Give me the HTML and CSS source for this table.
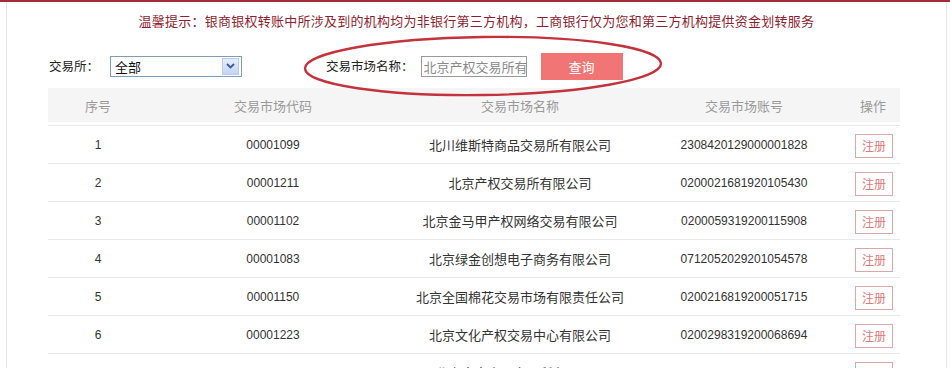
FILE: index.html
```html
<!DOCTYPE html>
<html lang="zh-CN">
<head>
<meta charset="utf-8">
<title>交易市场</title>
<link rel="stylesheet" href="styles.css">
</head>
<body>
<div class="outer">
  <div class="shell">
    <p class="notice">温馨提示：银商银权转账中所涉及到的机构均为非银行第三方机构，工商银行仅为您和第三方机构提供资金划转服务</p>
    <div class="filters">
      <span class="label">交易所：</span>
      <div class="select">
        <span class="select-text">全部</span>
        <span class="select-btn">
          <svg width="9" height="6" viewBox="0 0 9 6"><path d="M1 1 L4.5 4.5 L8 1" fill="none" stroke="#3a5a9a" stroke-width="1.8"/></svg>
        </span>
      </div>
      <span class="label label-market">交易市场名称：</span>
      <div class="input">北京产权交易所有限公司</div>
      <button class="search">查询</button>
    </div>
    <div class="grid">
      <div class="thead">
        <div>序号</div><div>交易市场代码</div><div>交易市场名称</div><div>交易市场账号</div><div>操作</div>
      </div>
      <div class="row"><div class="num">1</div><div class="num">00001099</div><div class="name">北川维斯特商品交易所有限公司</div><div class="num">2308420129000001828</div><div><span class="reg">注册</span></div></div>
      <div class="row"><div class="num">2</div><div class="num">00001211</div><div class="name">北京产权交易所有限公司</div><div class="num">0200021681920105430</div><div><span class="reg">注册</span></div></div>
      <div class="row"><div class="num">3</div><div class="num">00001102</div><div class="name">北京金马甲产权网络交易有限公司</div><div class="num">0200059319200115908</div><div><span class="reg">注册</span></div></div>
      <div class="row"><div class="num">4</div><div class="num">00001083</div><div class="name">北京绿金创想电子商务有限公司</div><div class="num">0712052029201054578</div><div><span class="reg">注册</span></div></div>
      <div class="row"><div class="num">5</div><div class="num">00001150</div><div class="name">北京全国棉花交易市场有限责任公司</div><div class="num">0200216819200051715</div><div><span class="reg">注册</span></div></div>
      <div class="row"><div class="num">6</div><div class="num">00001223</div><div class="name">北京文化产权交易中心有限公司</div><div class="num">0200298319200068694</div><div><span class="reg">注册</span></div></div>
      <div class="row"><div class="num">7</div><div class="num">00001236</div><div class="name">北京大宗商品交易所有限公司</div><div class="num">0200049319200074411</div><div><span class="reg">注册</span></div></div>
    </div>
  </div>
  <svg class="circle" width="380" height="74" viewBox="0 0 380 74">
    <ellipse cx="186" cy="36" rx="178" ry="29" fill="none" stroke="#c4323c" stroke-width="2.4" transform="rotate(-0.8 186 36)"/>
  </svg>
</div>
</body>
</html>
```
FILE: styles.css
```css
html, body {
  margin: 0;
  padding: 0;
  background: #fff;
  font-family: "Noto Sans CJK SC", "Liberation Sans", sans-serif;
}
.outer {
  position: relative;
  border-top: 2px solid #a32d37;
  height: 366px;
  overflow: hidden;
  padding-left: 6px;
}
.shell {
  width: 939px;
  height: 400px;
  border-left: 1px solid #e6e6e6;
  border-right: 1px solid #e6e6e6;
}
.notice {
  margin: 0;
  padding-top: 9px;
  height: 20px;
  line-height: 20px;
  text-align: center;
  font-size: 13px;
  color: #8e1f30;
  letter-spacing: 0.25px;
}
.filters {
  display: flex;
  align-items: center;
  height: 28px;
  margin-top: 21px;
  padding-left: 42px;
}
.label {
  font-size: 12.5px;
  color: #222;
  line-height: 20px;
}
.select {
  margin-left: 11px;
  width: 130px;
  height: 19px;
  border: 1px solid #7f9db9;
  display: flex;
  align-items: center;
  justify-content: space-between;
}
.select-text {
  font-size: 13px;
  color: #111;
  padding-left: 4px;
  line-height: 17px;
}
.select-btn {
  width: 15px;
  height: 15px;
  margin-right: 2px;
  border: 1px solid #b9cbe8;
  background: linear-gradient(#e6eefc, #c4d5f3);
  display: flex;
  align-items: center;
  justify-content: center;
}
.label-market {
  margin-left: 84px;
}
.input {
  margin-left: 7px;
  width: 102px;
  height: 19px;
  border: 1px solid #9a9a9a;
  font-size: 13px;
  line-height: 19px;
  color: #8a8a8a;
  padding-left: 2px;
  white-space: nowrap;
  overflow: hidden;
}
.search {
  margin-left: 14px;
  width: 82px;
  height: 27px;
  border: none;
  background: #f27575;
  color: #fff;
  font-family: "Noto Sans CJK SC", sans-serif;
  font-size: 13px;
  padding: 0;
}
.grid {
  margin-left: 41px;
  margin-top: 8px;
  width: 852px;
}
.thead, .row {
  display: grid;
  grid-template-columns: 100px 250px 244px 204px 54px;
  align-items: center;
  text-align: center;
}
.thead {
  height: 34px;
  background: #f5f5f5;
  color: #9a9a9a;
  font-size: 13px;
  margin-bottom: 3px;
}
.row {
  height: 37px;
  border-top: 1px solid #e8e8e8;
  color: #333;
}
.num {
  font-family: "Liberation Sans", sans-serif;
  font-size: 12px;
}
.name {
  font-size: 13px;
}
.reg {
  display: inline-block;
  width: 36px;
  height: 22px;
  line-height: 22px;
  border: 1px solid #dba8a8;
  color: #e07a7a;
  font-size: 12px;
  margin-left: 2px;
}
.circle {
  position: absolute;
  left: 297px;
  top: 28px;
}
```
